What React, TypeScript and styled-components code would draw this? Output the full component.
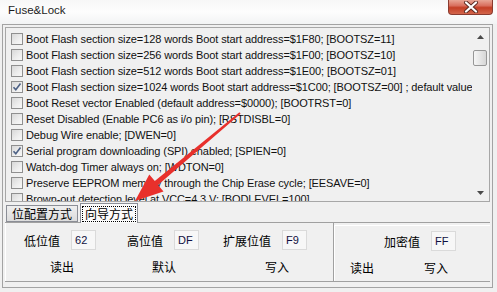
import React from 'react';
import styled, { createGlobalStyle } from 'styled-components';

const GlobalStyle = createGlobalStyle`
  html, body {
    margin: 0;
    padding: 0;
  }
  body {
    width: 497px;
    height: 292px;
    overflow: hidden;
    background: #f0f0f0;
    font-family: "Liberation Sans", Arial, sans-serif;
  }
`;

type Fuse = { text: string; checked?: boolean };

const fuses: Fuse[] = [
  { text: 'Boot Flash section size=128 words Boot start address=$1F80; [BOOTSZ=11]' },
  { text: 'Boot Flash section size=256 words Boot start address=$1F00; [BOOTSZ=10]' },
  { text: 'Boot Flash section size=512 words Boot start address=$1E00; [BOOTSZ=01]' },
  {
    text: 'Boot Flash section size=1024 words Boot start address=$1C00; [BOOTSZ=00] ; default value',
    checked: true,
  },
  { text: 'Boot Reset vector Enabled (default address=$0000); [BOOTRST=0]' },
  { text: 'Reset Disabled (Enable PC6 as i/o pin); [RSTDISBL=0]' },
  { text: 'Debug Wire enable; [DWEN=0]' },
  { text: 'Serial program downloading (SPI) enabled; [SPIEN=0]', checked: true },
  { text: 'Watch-dog Timer always on; [WDTON=0]' },
  { text: 'Preserve EEPROM memory through the Chip Erase cycle; [EESAVE=0]' },
  { text: 'Brown-out detection level at VCC=4.3 V; [BODLEVEL=100]' },
];

export default function App() {
  return (
    <>
      <GlobalStyle />
      <Window>
        <TitleBar>
          <Title>Fuse&amp;Lock</Title>
          <CloseButton>
            <svg width='16' height='12' viewBox='0 0 16 12'>
              <path d='M3 1.5 L13 10.5 M13 1.5 L3 10.5' stroke='#5a2a22' strokeWidth='4' strokeLinecap='round' />
              <path d='M3 1.5 L13 10.5 M13 1.5 L3 10.5' stroke='#ffffff' strokeWidth='2.2' strokeLinecap='round' />
            </svg>
          </CloseButton>
        </TitleBar>
        <Frame>
          <ListBox>
            <Rows>
              {fuses.map(fuse => (
                <Row key={fuse.text}>
                  <CheckBox>
                    {fuse.checked && (
                      <svg width='10' height='10' viewBox='0 0 10 10'>
                        <path d='M1.5 5.2 L3.8 7.8 L8.5 1.5' fill='none' stroke='#4d6185' strokeWidth='1.6' />
                      </svg>
                    )}
                  </CheckBox>
                  <RowText>{fuse.text}</RowText>
                </Row>
              ))}
            </Rows>
            <ScrollBar>
              <ScrollArrow>
                <svg width='7' height='4' viewBox='0 0 7 4'>
                  <path d='M0 4 L3.5 0 L7 4 Z' fill='#4a4a4a' />
                </svg>
              </ScrollArrow>
              <Thumb />
              <Track />
              <ScrollArrow>
                <svg width='7' height='4' viewBox='0 0 7 4'>
                  <path d='M0 0 L3.5 4 L7 0 Z' fill='#4a4a4a' />
                </svg>
              </ScrollArrow>
            </ScrollBar>
          </ListBox>
          <TabStrip>
            <Tab>位配置方式</Tab>
            <Tab $active>
              <FocusRect>向导方式</FocusRect>
            </Tab>
          </TabStrip>
          <Panels>
            <TabPanel>
              <FieldRow>
                <Label $ml={18}>低位值</Label>
                <ValueBox>62</ValueBox>
                <Label $ml={31}>高位值</Label>
                <ValueBox>DF</ValueBox>
                <Label $ml={24}>扩展位值</Label>
                <ValueBox>F9</ValueBox>
              </FieldRow>
              <ButtonRow>
                <FlatButton $ml={18} $width={76}>读出</FlatButton>
                <FlatButton $ml={26} $width={76}>默认</FlatButton>
                <FlatButton $ml={37} $width={76}>写入</FlatButton>
              </ButtonRow>
            </TabPanel>
            <LockGroup>
              <FieldRow>
                <Label $ml={49}>加密值</Label>
                <ValueBox>FF</ValueBox>
              </FieldRow>
              <ButtonRow>
                <FlatButton $ml={2} $width={50}>读出</FlatButton>
                <FlatButton $ml={24} $width={50}>写入</FlatButton>
              </ButtonRow>
            </LockGroup>
          </Panels>
          <StatusBar />
        </Frame>
        <Annotation width='497' height='292' viewBox='0 0 497 292'>
          <polygon
            points='240.6,113.8 158,184.9 163.5,191.4 135,201 149.3,174.6 154.8,181.1 239.4,112.2'
            fill='#e8302c'
          />
        </Annotation>
      </Window>
    </>
  );
}

const Window = styled.div`
  position: relative;
  width: 497px;
  height: 292px;
  background: #f0f0f0;
`;

const TitleBar = styled.div`
  display: flex;
  align-items: flex-start;
  justify-content: space-between;
  height: 24px;
  padding: 0 4px 0 8px;
  box-sizing: border-box;
  background: linear-gradient(180deg, #f7f7f7 0%, #fdfdfd 50%, #f2f3f4 100%);
`;

const Title = styled.div`
  margin-top: 4px;
  font-size: 11.5px;
  color: #1c1c1c;
`;

const CloseButton = styled.div`
  display: flex;
  align-items: center;
  justify-content: center;
  width: 45px;
  height: 15px;
  box-sizing: border-box;
  border: 1px solid #8a3b30;
  border-top: none;
  border-radius: 0 0 4px 4px;
  background: linear-gradient(180deg, #e8a595 0%, #d9705f 40%, #c43f26 55%, #d3664c 100%);
`;

const Frame = styled.div`
  display: flex;
  flex-direction: column;
  width: 491px;
  height: 264px;
  margin-left: 2px;
  padding: 2px 2px 0;
  box-sizing: border-box;
  border: 1px solid #a3a3a3;
`;

const ListBox = styled.div`
  display: flex;
  height: 175px;
  box-sizing: border-box;
  border: 1px solid #a7a7a7;
  background: #f0f0f0;
  overflow: hidden;
`;

const Rows = styled.div`
  flex: 1;
  min-width: 0;
  padding-top: 3px;
  overflow: hidden;
`;

const Row = styled.div`
  display: flex;
  align-items: center;
  height: 16px;
  padding-left: 5px;
`;

const CheckBox = styled.div`
  display: flex;
  align-items: center;
  justify-content: center;
  flex: none;
  width: 12px;
  height: 12px;
  box-sizing: border-box;
  border: 1px solid #8f8f8f;
  background: linear-gradient(135deg, #d8d8d8 0%, #eeeeee 60%, #f8f8f8 100%);
`;

const RowText = styled.span`
  margin-left: 3px;
  font-size: 11px;
  letter-spacing: -0.1px;
  color: #111;
  white-space: nowrap;
`;

const ScrollBar = styled.div`
  display: flex;
  flex-direction: column;
  flex: none;
  width: 17px;
  background: #f0f0f0;
`;

const ScrollArrow = styled.div`
  display: flex;
  align-items: center;
  justify-content: center;
  height: 17px;
`;

const Thumb = styled.div`
  height: 14px;
  margin: 5px 2px 0 1px;
  border: 1px solid #979797;
  border-radius: 2px;
  background: linear-gradient(90deg, #f6f6f6 0%, #e6e6e6 50%, #d6d6d6 100%);
`;

const Track = styled.div`
  flex: 1;
`;

const TabStrip = styled.div`
  display: flex;
  align-items: flex-end;
  height: 20px;
  border-bottom: 1px solid #a0a0a0;
  font-family: "Noto Sans CJK SC", sans-serif;
  font-size: 12px;
`;

const Tab = styled.div<{ $active?: boolean }>`
  display: flex;
  align-items: center;
  justify-content: center;
  box-sizing: border-box;
  height: ${p => (p.$active ? '20px' : '17px')};
  margin-left: ${p => (p.$active ? '2px' : '1px')};
  margin-bottom: ${p => (p.$active ? '-1px' : '0')};
  padding: 0 ${p => (p.$active ? '2px' : '5px')};
  border: 1px solid #8b8e96;
  border-bottom: ${p => (p.$active ? 'none' : '1px solid #8b8e96')};
  background: ${p => (p.$active ? '#fbfbfb' : 'linear-gradient(180deg, #efefef 0%, #dcdcdc 100%)')};
  color: #000;
`;

const FocusRect = styled.span`
  padding: 0 2px;
  line-height: 14px;
  outline: 1px dotted #000;
`;

const Panels = styled.div`
  display: flex;
  height: 58px;
`;

const TabPanel = styled.div`
  display: flex;
  flex-direction: column;
  width: 329px;
  box-sizing: border-box;
  padding-top: 7px;
  border-left: 1px solid #fff;
  border-right: 1px solid #a0a0a0;
`;

const LockGroup = styled.div`
  display: flex;
  flex-direction: column;
  flex: 1;
  box-sizing: border-box;
  margin-top: 2px;
  padding-top: 5px;
  border-top: 1px solid #fff;
  border-left: 1px solid #fff;
`;

const FieldRow = styled.div`
  display: flex;
  align-items: center;
  height: 20px;
`;

const Label = styled.span<{ $ml: number }>`
  margin-left: ${p => p.$ml}px;
  font-family: "Noto Sans CJK SC", sans-serif;
  font-size: 12px;
  color: #000;
  white-space: nowrap;
`;

const ValueBox = styled.div`
  display: flex;
  align-items: center;
  width: 25px;
  height: 20px;
  margin-left: 11px;
  padding-left: 3px;
  box-sizing: border-box;
  border: 1px solid #dadada;
  background: #f7f7f7;
  font-family: "Liberation Sans", Arial, sans-serif;
  font-size: 11px;
  color: #101040;
`;

const ButtonRow = styled.div`
  display: flex;
  align-items: center;
  height: 20px;
  margin-top: 6px;
`;

const FlatButton = styled.div<{ $ml: number; $width: number }>`
  display: flex;
  align-items: center;
  justify-content: center;
  width: ${p => p.$width}px;
  height: 20px;
  margin-left: ${p => p.$ml}px;
  font-family: "Noto Sans CJK SC", sans-serif;
  font-size: 12px;
  color: #000;
`;

const StatusBar = styled.div`
  flex: 1;
  border-top: 1px solid #a0a0a0;
`;

const Annotation = styled.svg`
  position: absolute;
  left: 0;
  top: 0;
  pointer-events: none;
`;
